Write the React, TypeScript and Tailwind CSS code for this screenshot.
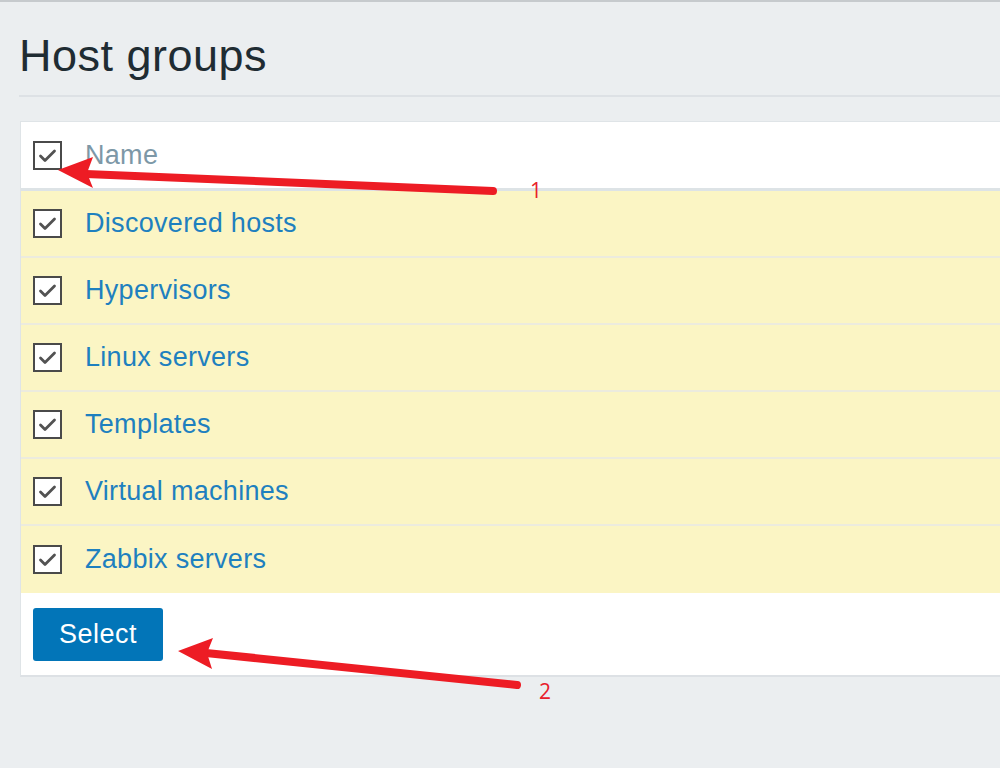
import React from "react";

const rows = [
  "Discovered hosts",
  "Hypervisors",
  "Linux servers",
  "Templates",
  "Virtual machines",
  "Zabbix servers",
];

function Check() {
  return (
    <div className="w-[29px] h-[29px] border-[2.5px] border-[#4a4a4a] bg-white flex items-center justify-center shrink-0">
      <svg width="21" height="21" viewBox="0 0 21 21">
        <polyline
          points="3.5,11 8,15.5 17.5,6"
          fill="none"
          stroke="#525252"
          strokeWidth="2.8"
          strokeLinejoin="round"
          strokeLinecap="round"
        />
      </svg>
    </div>
  );
}

export default function App() {
  return (
    <div className="relative w-[1000px] h-[768px] overflow-hidden bg-[#ebeef0] border-t-2 border-[#c6cacd] font-['Liberation_Sans',Arial,sans-serif]">
      <h1 className="pl-[19px] pt-[28px] text-[45px] leading-[52px] text-[#1f2c33] tracking-[0.5px]">
        Host groups
      </h1>
      <div className="ml-[19px] mt-[13px] h-[2px] bg-[#dde1e5]" />
      <div className="ml-[20px] mt-[24px] bg-white border-l border-t border-[#dfe4e7] border-b-2 border-b-[#dde1e5]">
        <div className="h-[69px] flex items-center pl-[12px] border-b-[3px] border-[#dde3e6]">
          <Check />
          <span className="ml-[23px] text-[27px] text-[#7d98a7] tracking-[0.3px]">Name</span>
        </div>
        {rows.map((r, i) => (
          <div
            key={r}
            className={
              i < rows.length - 1
                ? "h-[67px] flex items-center pl-[12px] bg-[#fbf5c4] border-b-2 border-[#ecebde]"
                : "h-[67px] flex items-center pl-[12px] bg-[#fbf5c4]"
            }
          >
            <Check />
            <span className="ml-[23px] text-[27px] text-[#1e80bf] tracking-[0.3px]">{r}</span>
          </div>
        ))}
        <div className="pt-[15px] pb-[14px] pl-[12px]">
          <button className="w-[130px] h-[53px] bg-[#0275b8] rounded-[3px] text-white text-[27px] tracking-[0.5px]">
            Select
          </button>
        </div>
      </div>

      <svg className="absolute left-0 top-0" width="1000" height="768" viewBox="0 0 1000 768">
        <line x1="493" y1="189" x2="86" y2="172" stroke="#ed1c24" strokeWidth="8" strokeLinecap="round" />
        <polygon points="58,168 93,155 87,171 93,186" fill="#ed1c24" />
        <line x1="517" y1="683" x2="206" y2="651" stroke="#ed1c24" strokeWidth="8" strokeLinecap="round" />
        <polygon points="178,649 213,636 207,651 212,667" fill="#ed1c24" />
      </svg>
      <span className="absolute left-[530px] top-[174px] text-[21px] leading-[28px] text-[#e8202a] font-['Open_Sans',sans-serif]">
        1
      </span>
      <span className="absolute left-[539px] top-[675px] text-[21px] leading-[28px] text-[#e8202a] font-['Open_Sans',sans-serif]">
        2
      </span>
    </div>
  );
}
